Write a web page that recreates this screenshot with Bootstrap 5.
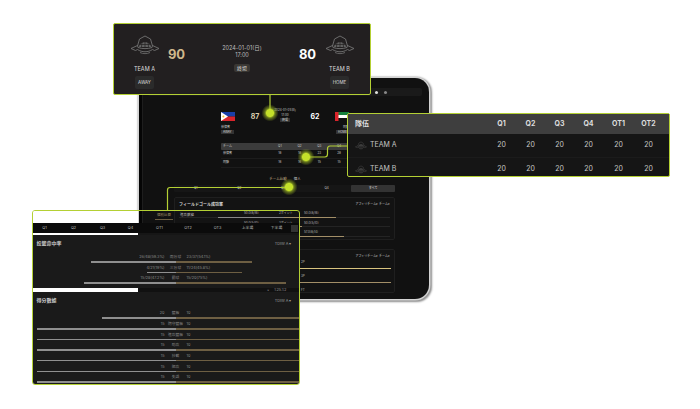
<!DOCTYPE html>
<html lang="zh-Hant">
<head>
<meta charset="UTF-8">
<title>Game stats</title>
<link href="https://cdn.jsdelivr.net/npm/bootstrap@5.3.0/dist/css/bootstrap.min.css" rel="stylesheet">
<style>
body { background: #fff; font-family: Inter, "Noto Sans CJK TC", sans-serif; margin: 0; }
.stage { position: relative; width: 700px; height: 409px; overflow: hidden; background: #fff; }
.callout { position: absolute; border: 1.5px solid #b4d034; border-radius: 2px; color: #ddd; overflow: hidden; }

/* tablet */
.tablet { position: absolute; left: 139px; top: 78px; width: 290px; height: 221px; background: linear-gradient(to right, #050505 3px, #1e1e1e 3px, #1e1e1e 4px, #111 4px); border-radius: 3px 14px 14px 3px; box-shadow: 0 0 0 1.5px #d4d4d4, 1px 1px 2px 1.5px #8e8e8e; overflow: hidden; color: #ccc; padding: 10px 9px 0; }
.tablet-top { height: 8px; background: #1a1a1a; border-radius: 2px; gap: 6px; padding-right: 35px; width: 274px; }
.tablet-top i { width: 3px; height: 3px; border-radius: 50%; background: #ddd; }
.tablet-top i + i { background: #888; }
.mini-score { width: 128px; height: 23px; margin: 16px 0 0 73px; font-size: 3px; line-height: 5px; display: grid; grid-template-columns: 14px 40px 20px 40px 14px; }
.mini-flag { width: 14px; height: 9px; display: block; }
.mini-num { font-size: 7px; font-weight: 700; line-height: 9px; text-align: center; }
.mini-num.tan { color: #dccfae; }
.mini-tag { display: inline-block; background: #333; padding: 0 2px; color: #ddd; line-height: 4px; }
.mini-date { margin: -4px -10px 0; text-align: center; }
.mini-table { width: 128px; margin: 8px 0 0 73px; font-size: 3px; }
.mini-head { height: 6.5px; background: #3b3b3b; border-radius: 1px; }
.mini-row { height: 9px; border-bottom: 1px solid #1c1c1c; }
.mini-table .cols { display: grid; grid-template-columns: 47px repeat(4, 1fr); align-items: center; padding-left: 2px; text-align: center; }
.mini-table .cols > :first-child { text-align: left; }
.mini-tabs { font-size: 3.5px; gap: 7px; margin-top: 9px; height: 5px; line-height: 5px; width: 274px; }
.period-row { width: 221px; margin: 3.5px 0 0 26px; height: 7px; background: #161616; font-size: 3px; border-radius: 1px; }
.period-row span { flex: 1; text-align: center; line-height: 7px; }
.period-row .on { margin: 0 0 0 3px; background: #333; color: #eee; border-radius: 1px; }
.mini-card { width: 221px; margin: 5px 0 0 26px; border: 1px solid #1f1f1f; border-radius: 2px; background: #131313; padding: 4px; font-size: 3px; overflow: hidden; }
.mini-card.one { height: 43px; }
.mini-card.two { height: 44px; margin-top: 9px; }
.mini-title { font-size: 4px; font-weight: 700; color: #ddd; }
.mini-stat { height: 9.5px; position: relative; }
.mini-stat.tall { height: 14px; }
.mini-stat.first { height: 10px; }
.mini-line { position: absolute; left: 0; right: 0; bottom: 0; height: 1px; background: #242424; }
.mini-fill { position: absolute; bottom: 0; height: 1px; background: #a38f68; }
.mini-fill.gray { background: #888; }
.mini-fill.yel { background: #d8c37f; }
.mini-lab { position: absolute; bottom: 1.5px; color: #bbb; line-height: 5px; }
.mini-stat.tall .mini-lab { left: 122px; bottom: 4px; }

/* top score panel */
.panel-score { left: 113px; top: 23px; width: 258px; height: 72px; background: #221f20; padding: 10.5px 16.500px 0; z-index: 3; }
.team-col { width: 28px; font-size: 5.5px; }
.team-logo { width: 30px; height: 20px; display: block; margin: 0 -1px; color: #737373; }
.team-name { margin-top: 10px; line-height: 8px; }
.team-side { display: inline-block; background: #2b2b2b; height: 13px; line-height: 13px; padding: 0 3px; border-radius: 2px; margin: 3px -2px 0; font-size: 4.5px; white-space: nowrap; }
.big-num { font-size: 13px; font-weight: 700; line-height: 16px; margin-top: 11px; width: 36px; text-align: center; }
.tan { color: #cfb88c; }
.match-info { font-size: 5.5px; line-height: 7px; color: #bdbdbd; padding-top: 10.5px; }
.match-tag { display: inline-block; margin-top: 4.500px; background: #3a3733; padding: 1px 3px; line-height: 6px; border-radius: 2px; color: #ddd; font-size: 5px; }

/* quarter table */
.panel-quarters { left: 347px; top: 113px; width: 323px; height: 64px; background: #151515; z-index: 3; }
.q-grid { display: grid; grid-template-columns: 132px repeat(4, 29px) 31px 29px; align-items: center; padding-left: 7px; text-align: center; font-size: 7px; color: #c6c6c6; }
.q-grid > :first-child { text-align: left; }
.q-head { height: 19.5px; background: #3e3e3e; font-weight: 700; color: #ddd; }
.q-row { height: 24px; border-bottom: 1px solid #1b1b1b; padding-top: 1px; }
.q-logo { width: 12px; height: 9px; color: #5c5c5c; margin-right: 3px; }

/* stats panel */
.panel-stats { left: 32px; top: 210px; width: 268px; height: 175px; z-index: 3; border-radius: 3px; }
.stats-inner { width: 281.5px; }
.peek { height: 12px; }
.peek-white { width: 105px; background: #fff; }
.peek-tabs { font-size: 3.5px; color: #bbb; padding-left: 17px; gap: 7px; line-height: 6px; padding-top: 1px; }
.peek-tabs span { height: 8px; }
.peek-tabs .on { color: #a38f68; border-bottom: 1px solid #6e5f43; padding: 0 2px; }
.period-strip { height: 10px; background: #0b0b0b; font-size: 3.8px; color: #bbb; position: relative; }
.period-strip span { position: absolute; top: 2px; transform: translateX(-50%); line-height: 6px; }
.period-strip .thumb { left: 258px; top: 2px; width: 7px; height: 7px; background: #333; transform: none; }
.gap-strip { height: 2px; background: #161616; }
.gap-strip b { display: block; width: 105px; height: 2px; background: #fff; }
.stats-body { background: #1a1a1a; padding: 0 0 0 3.5px; }
.stats-head { font-size: 5px; font-weight: 700; color: #ccc; width: 262px; padding-right: 7px; height: 18px; }
.stats-head.next { height: 17.500px; }
.stats-pick { font-size: 3.8px; font-weight: 400; color: #999; }
.stat-line { height: 10.65px; width: 278px; }
.stat-words { display: grid; grid-template-columns: 1fr 22px 1fr; font-size: 3.8px; line-height: 8px; height: 8px; color: #888; text-align: center; }
.stat-words span:first-child { text-align: right; }
.stat-words span:last-child { text-align: left; }
.stat-track { display: flex; height: 1.5px; width: 278px; }
.stat-track > div { flex: 0 0 139px; display: flex; }
.stat-track .lhs { justify-content: flex-end; }
.stat-track i { display: block; height: 1.5px; }
.stat-track .lhs i { background: #8f8f8f; }
.stat-track .rhs i { background: #6e5f43; }
.divider-strip { height: 4px; display: flex; background: #111; margin: 3px 0 0 -3.5px; font-size: 3.5px; line-height: 4px; color: #999; }
.divider-strip b { width: 105px; background: #fff; margin-right: 129px; }
.overlay-lines { position: absolute; left: 0; top: 0; z-index: 2; }
.overlay-dots { position: absolute; left: 0; top: 0; z-index: 4; pointer-events: none; }
</style>
</head>
<body>
<svg width="0" height="0" class="d-block" aria-hidden="true">
  <symbol id="crest" viewBox="0 0 30 20">
    <path d="M7.500 11 L9.500 4 L15 1 L20.500 4 L22.500 11" fill="none" stroke="currentColor" stroke-width=".9"/>
    <path d="M9 12 C9.500 5.500 20.500 5.500 21 12 Z" fill="currentColor" opacity=".8"/>
    <path d="M12 7 L11.500 12 M15 6.500 V12 M18 7 L18.500 12 M9.800 9.500 H20.200" fill="none" stroke="#221f20" stroke-width=".7"/>
    <path d="M1 13.500 L7.500 10.500 L8 12.500 C12 14 18 14 22 12.500 L22.500 10.500 L29 13.500 L24.500 15.500 L22.500 14.500 C18 17.500 12 17.500 7.500 14.500 L5.500 15.500 Z" fill="none" stroke="currentColor" stroke-width=".9"/>
    <path d="M10 17.500 C13 19 17 19 20 17.500" fill="none" stroke="currentColor" stroke-width=".8"/>
  </symbol>
  <symbol id="flag-ph" viewBox="0 0 14 9">
    <rect width="14" height="4.500" fill="#1a3fa8"/><rect y="4.500" width="14" height="4.500" fill="#d9242b"/>
    <path d="M0 0 L7 4.500 L0 9 Z" fill="#fff"/><circle cx="2.400" cy="4.500" r="1" fill="#f2c230"/>
  </symbol>
  <symbol id="flag-ae" viewBox="0 0 14 9">
    <rect width="14" height="3" fill="#15803d"/><rect y="3" width="14" height="3" fill="#fff"/><rect y="6" width="14" height="3" fill="#111"/>
    <rect width="3.500" height="9" fill="#d9242b"/>
  </symbol>
</svg>

<div class="stage">
  <!-- Tablet behind the callouts -->
  <div class="tablet">
    <div class="tablet-top d-flex align-items-center justify-content-end"><i></i><i></i></div>
    <div class="mini-score">
      <div>
        <svg class="mini-flag"><use href="#flag-ph"/></svg>
        <div class="mt-1">菲律賓</div>
        <div class="mini-tag">AWAY</div>
      </div>
      <div class="mini-num tan">87</div>
      <div class="mini-date">2024-01-01(日)<br>17:00<br><span class="mini-tag">終場</span></div>
      <div class="mini-num text-white">62</div>
      <div class="text-end">
        <svg class="mini-flag"><use href="#flag-ae"/></svg>
        <div class="mt-1">阿聯</div>
        <div class="mini-tag">HOME</div>
      </div>
    </div>
    <div class="mini-table">
      <div class="mini-head cols"><span>チーム</span><span>Q1</span><span>Q2</span><span>Q3</span><span>Q4</span></div>
      <div class="mini-row cols"><span>菲律賓</span><span>18</span><span>18</span><span>23</span><span>28</span></div>
      <div class="mini-row cols"><span>阿聯</span><span>16</span><span>16</span><span>15</span><span>15</span></div>
    </div>
    <div class="mini-tabs d-flex justify-content-center"><span class="tan">チーム比較</span><span>個人</span></div>
    <div class="period-row d-flex"><span>Q1</span><span>Q2</span><span>Q3</span><span>Q4</span><span class="on">すべて</span></div>
    <div class="mini-card one">
      <div class="d-flex justify-content-between"><span class="mini-title">フィールドゴール成功率</span><span>アフィリチーム▾ チーム▾</span></div>
      <div class="mini-stat"><span class="mini-lab" style="left:65px">50.0(8/16)</span><span class="mini-lab" style="left:100px">2ポイント</span><span class="mini-lab" style="left:125px">50.0(8/16)</span><div class="mini-line"></div><div class="mini-fill" style="left:105px;width:52px"></div><div class="mini-fill gray" style="left:39px;width:66px"></div></div>
      <div class="mini-stat"><span class="mini-lab" style="left:65px">50.0(5/10)</span><span class="mini-lab" style="left:100px">3ポイント</span><span class="mini-lab" style="left:125px">50.0(5/10)</span><div class="mini-line"></div><div class="mini-fill" style="left:105px;width:18px"></div></div>
      <div class="mini-stat"><span class="mini-lab" style="left:125px">57.0(8/14)</span><div class="mini-line"></div><div class="mini-fill" style="left:105px;width:60px"></div></div>
    </div>
    <div class="mini-card two">
      <div class="d-flex justify-content-end"><span>アフィリチーム▾ チーム▾</span></div>
      <div class="mini-stat tall first"><span class="mini-lab">2P</span><div class="mini-fill yel" style="left:105px;width:107px"></div></div>
      <div class="mini-stat tall"><span class="mini-lab">3P</span><div class="mini-fill" style="left:105px;width:107px"></div></div>
      <div class="mini-stat tall"><span class="mini-lab">FT</span><div class="mini-fill yel" style="left:105px;width:107px"></div></div>
    </div>
  </div>

  <!-- Connector lines under callouts -->
  <svg class="overlay-lines" width="700" height="409" aria-hidden="true">
    <g fill="none" stroke="#b4d034" stroke-width="1.2">
      <path d="M270 95 V113"/>
      <path d="M306 157 H325 Q327.500 157 327.500 154 V149 Q327.500 146 330 146 H347"/>
      <path d="M289 187.500 H170 Q167.500 187.500 167.500 190 V210"/>
    </g>
  </svg>

  <!-- Score callout -->
  <div class="callout panel-score d-flex justify-content-between">
    <div class="team-col text-center">
      <svg class="team-logo"><use href="#crest"/></svg>
      <div class="team-name">TEAM A</div>
      <div class="team-side">AWAY</div>
    </div>
    <div class="big-num tan">90</div>
    <div class="match-info text-center flex-grow-1">
      <div>2024-01-01(日)</div>
      <div>17:00</div>
      <span class="match-tag">終場</span>
    </div>
    <div class="big-num text-white">80</div>
    <div class="team-col text-center">
      <svg class="team-logo"><use href="#crest"/></svg>
      <div class="team-name">TEAM B</div>
      <div class="team-side">HOME</div>
    </div>
  </div>

  <!-- Quarter table callout -->
  <div class="callout panel-quarters">
    <div class="q-grid q-head"><span>隊伍</span><span>Q1</span><span>Q2</span><span>Q3</span><span>Q4</span><span>OT1</span><span>OT2</span></div>
    <div class="q-grid q-row">
      <span class="d-flex align-items-center"><svg class="q-logo"><use href="#crest"/></svg>TEAM A</span>
      <span>20</span><span>20</span><span>20</span><span>20</span><span>20</span><span>20</span>
    </div>
    <div class="q-grid q-row">
      <span class="d-flex align-items-center"><svg class="q-logo"><use href="#crest"/></svg>TEAM B</span>
      <span>20</span><span>20</span><span>20</span><span>20</span><span>20</span><span>20</span>
    </div>
  </div>

  <!-- Stats callout -->
  <div class="callout panel-stats">
    <div class="stats-inner">
      <div class="peek d-flex">
        <div class="peek-white"></div>
        <div class="peek-tabs d-flex"><span class="on">個別比賽</span><span>進攻數據</span></div>
      </div>
      <div class="period-strip">
        <span style="left:11.5px">Q1</span><span style="left:40.5px">Q2</span><span style="left:69.5px">Q3</span><span style="left:97.5px">Q4</span><span style="left:126.5px">OT1</span><span style="left:155px">OT2</span><span style="left:184.5px">OT3</span><span style="left:214.5px">上半場</span><span style="left:243.5px">下半場</span><span class="thumb"></span>
      </div>
      <div class="gap-strip"><b></b></div>
      <div class="stats-body">
        <div class="stats-head d-flex justify-content-between align-items-center"><span>投籃命中率</span><span class="stats-pick">TDIW A ▾</span></div>
        <div class="stat-line">
          <div class="stat-words"><span>26/48(59.3%)</span><span>兩分球</span><span>23/37(54.1%)</span></div>
          <div class="stat-track"><div class="lhs"><i style="width:85px"></i></div><div class="rhs"><i style="width:76px"></i></div></div>
        </div>
        <div class="stat-line">
          <div class="stat-words"><span>4/21(19%)</span><span>三分球</span><span>11/24(45.8%)</span></div>
          <div class="stat-track"><div class="lhs"><i style="width:29px"></i></div><div class="rhs"><i style="width:66px"></i></div></div>
        </div>
        <div class="stat-line">
          <div class="stat-words"><span>15/28(47.2%)</span><span>罰球</span><span>15/20(75%)</span></div>
          <div class="stat-track"><div class="lhs"><i style="width:92px"></i></div><div class="rhs"><i style="width:110px"></i></div></div>
        </div>
        <div class="divider-strip"><b></b><span>×&nbsp;&nbsp;&nbsp;&nbsp;&nbsp;1:25:1:2</span></div>
        <div class="stats-head next d-flex justify-content-between align-items-center"><span>得分數據</span><span class="stats-pick">TDIW A ▾</span></div>
        <div class="stat-line">
          <div class="stat-words"><span>20</span><span>籃板</span><span>10</span></div>
          <div class="stat-track"><div class="lhs"><i style="width:74px"></i></div><div class="rhs"><i style="width:139px"></i></div></div>
        </div>
        <div class="stat-line">
          <div class="stat-words"><span>15</span><span>防守籃板</span><span>10</span></div>
          <div class="stat-track"><div class="lhs"><i style="width:139px"></i></div><div class="rhs"><i style="width:139px"></i></div></div>
        </div>
        <div class="stat-line">
          <div class="stat-words"><span>15</span><span>進攻籃板</span><span>10</span></div>
          <div class="stat-track"><div class="lhs"><i style="width:139px"></i></div><div class="rhs"><i style="width:139px"></i></div></div>
        </div>
        <div class="stat-line">
          <div class="stat-words"><span>15</span><span>助攻</span><span>10</span></div>
          <div class="stat-track"><div class="lhs"><i style="width:139px"></i></div><div class="rhs"><i style="width:139px"></i></div></div>
        </div>
        <div class="stat-line">
          <div class="stat-words"><span>15</span><span>抄截</span><span>10</span></div>
          <div class="stat-track"><div class="lhs"><i style="width:139px"></i></div><div class="rhs"><i style="width:139px"></i></div></div>
        </div>
        <div class="stat-line">
          <div class="stat-words"><span>15</span><span>阻攻</span><span>10</span></div>
          <div class="stat-track"><div class="lhs"><i style="width:139px"></i></div><div class="rhs"><i style="width:139px"></i></div></div>
        </div>
        <div class="stat-line">
          <div class="stat-words"><span>15</span><span>失誤</span><span>10</span></div>
          <div class="stat-track"><div class="lhs"><i style="width:139px"></i></div><div class="rhs"><i style="width:139px"></i></div></div>
        </div>
      </div>
    </div>
  </div>

  <!-- Glowing connector dots -->
  <svg class="overlay-dots" width="700" height="409" aria-hidden="true">
    <defs>
      <radialGradient id="glow">
        <stop offset="0" stop-color="#c4e02a"/>
        <stop offset=".42" stop-color="#c4e02a"/>
        <stop offset=".6" stop-color="#a4c024" stop-opacity=".55"/>
        <stop offset="1" stop-color="#a4c024" stop-opacity="0"/>
      </radialGradient>
    </defs>
    <circle cx="270" cy="113" r="8.500" fill="url(#glow)"/>
    <circle cx="306" cy="157" r="8.500" fill="url(#glow)"/>
    <circle cx="289" cy="187" r="8.500" fill="url(#glow)"/>
  </svg>
</div>
<script src="https://cdn.jsdelivr.net/npm/bootstrap@5.3.0/dist/js/bootstrap.bundle.min.js"></script>
</body>
</html>
